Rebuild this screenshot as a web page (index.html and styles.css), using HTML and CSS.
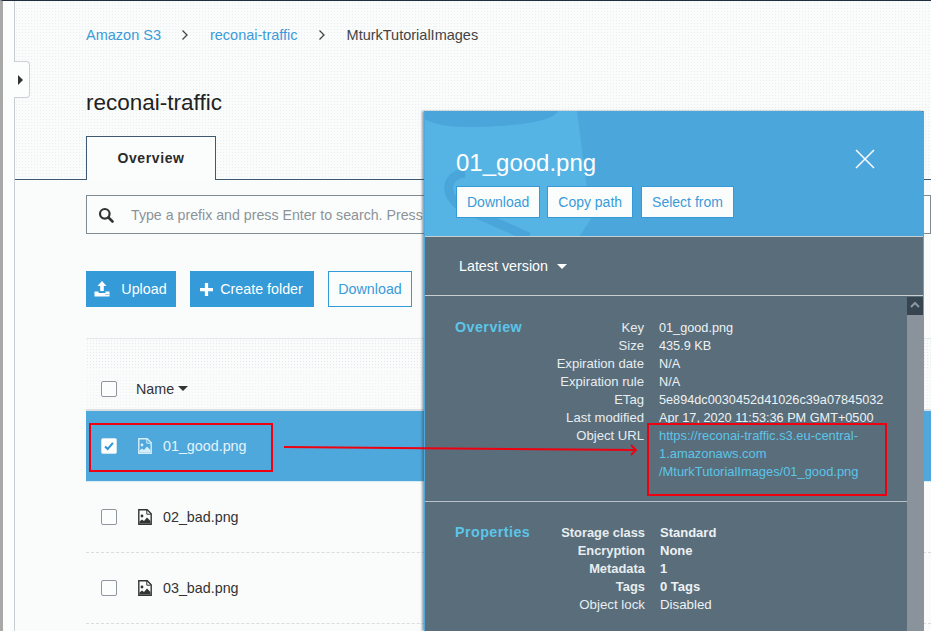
FILE: index.html
```html
<!DOCTYPE html>
<html>
<head>
<meta charset="utf-8">
<title>reconai-traffic - S3</title>
<link rel="stylesheet" href="styles.css">
</head>
<body>
<div class="page">
	<div class="rail">
		<button class="rail-toggle"><span class="rail-arrow"></span></button>
	</div>
	<div class="main">
		<div class="crumbs">
			<a>Amazon S3</a>
			<svg class="crumb-sep" viewBox="0 0 8 12"><path d="M1.5 1.5 6 6l-4.500 4.500" fill="none" stroke="#444" stroke-width="1.300"/></svg>
			<a>reconai-traffic</a>
			<svg class="crumb-sep" viewBox="0 0 8 12"><path d="M1.5 1.5 6 6l-4.500 4.500" fill="none" stroke="#444" stroke-width="1.300"/></svg>
			<span>MturkTutorialImages</span>
		</div>
		<h1 class="bucket">reconai-traffic</h1>
		<div class="tabs"><div class="tab">Overview</div></div>
		<div class="content">
			<div class="search">
				<svg class="search-icon" viewBox="0 0 16 16"><circle cx="6.800" cy="6.800" r="4.800" fill="none" stroke="#333" stroke-width="2.200"/><path d="m10.500 10.500 4 4" stroke="#333" stroke-width="2.600" stroke-linecap="round"/></svg>
				<span class="search-text">Type a prefix and press Enter to search. Press</span>
			</div>
			<div class="actions">
				<button class="btn btn-solid btn-upload">
					<svg class="btn-icon" viewBox="0 0 16 16"><path d="M8 0 12.500 5H9.800v5H6.200V5H3.500z" fill="#fff"/><path d="M.5 10.500h4v1.500h7v-1.500h4v5H.5z" fill="#fff"/><path d="M11.500 13.500h1M13.500 13.500h1" stroke="#349ad8"/></svg>
					Upload
				</button>
				<button class="btn btn-solid btn-create">
					<svg class="btn-icon-sm" viewBox="0 0 12 12"><path d="M4.500 0h3v4.500H12v3H7.500V12h-3V7.500H0v-3h4.500z" fill="#fff"/></svg>
					Create folder
				</button>
				<button class="btn btn-line">Download</button>
			</div>
			<div class="table">
				<div class="table-gap"></div>
				<div class="row head">
					<span class="check"></span>
					<span class="col-name">Name</span>
					<span class="caret"></span>
				</div>
				<div class="row selected">
					<span class="check on"><svg viewBox="0 0 16 16"><path d="m3.500 8.500 3 3 6-7" fill="none" stroke="#2f95d6" stroke-width="2.400"/></svg></span>
					<svg class="file-icon" viewBox="0 0 14 16"><path d="M.8.800h8.400l4 4v10.400H.8z" fill="none" stroke="#d8eefa" stroke-width="1.400"/><path d="M8.800 1v4.200h4" fill="none" stroke="#d8eefa"/><circle cx="4" cy="7" r="1.400" fill="#d8eefa"/><path d="M1.500 14.500v-2l2.500-2 2 1.500 3-3.500 3.500 3.500v2.500z" fill="#d8eefa"/></svg>
					<span class="file-name">01_good.png</span>
				</div>
				<div class="row">
					<span class="check"></span>
					<svg class="file-icon" viewBox="0 0 14 16"><path d="M.8.800h8.400l4 4v10.400H.8z" fill="none" stroke="#333" stroke-width="1.400"/><path d="M8.800 1v4.200h4" fill="none" stroke="#333"/><circle cx="4" cy="7" r="1.400" fill="#333"/><path d="M1.500 14.500v-2l2.500-2 2 1.500 3-3.500 3.500 3.500v2.500z" fill="#333"/></svg>
					<span class="file-name">02_bad.png</span>
				</div>
				<div class="row">
					<span class="check"></span>
					<svg class="file-icon" viewBox="0 0 14 16"><path d="M.8.800h8.400l4 4v10.400H.8z" fill="none" stroke="#333" stroke-width="1.400"/><path d="M8.800 1v4.200h4" fill="none" stroke="#333"/><circle cx="4" cy="7" r="1.400" fill="#333"/><path d="M1.500 14.500v-2l2.500-2 2 1.500 3-3.500 3.500 3.500v2.500z" fill="#333"/></svg>
					<span class="file-name">03_bad.png</span>
				</div>
			</div>
		</div>
	</div>
</div>

<div class="panel">
	<div class="panel-head">
		<svg class="panel-mark" viewBox="0 0 498 126"><path d="M0 0H152L166 108 154 126H0z" fill="#55b4e4"/><path d="M0 0H133C128 12 80 16 40 16 20 16 6 12 0 8z" fill="#4aa5da"/><path d="M40 62C20 64 18 84 36 96L104 126" fill="none" stroke="#4aa5da" stroke-width="9"/></svg>
		<div class="panel-title">
			<h2>01_good.png</h2>
			<svg class="close" viewBox="0 0 20 20"><path d="m1 1 18 18M19 1 1 19" stroke="#fff" stroke-width="1.500"/></svg>
		</div>
		<div class="panel-btns">
			<button class="pbtn">Download</button>
			<button class="pbtn">Copy path</button>
			<button class="pbtn">Select from</button>
		</div>
	</div>
	<div class="version">Latest version <span class="caret caret-white"></span></div>
	<div class="panel-body">
		<div class="details">
			<section class="section">
				<h3>Overview</h3>
				<dl class="props">
					<dt>Key</dt><dd>01_good.png</dd>
					<dt>Size</dt><dd>435.9 KB</dd>
					<dt>Expiration date</dt><dd>N/A</dd>
					<dt>Expiration rule</dt><dd>N/A</dd>
					<dt>ETag</dt><dd>5e894dc0030452d41026c39a07845032</dd>
					<dt>Last modified</dt><dd>Apr 17, 2020 11:53:36 PM GMT+0500</dd>
					<dt>Object URL</dt><dd class="url">https://reconai-traffic.s3.eu-central-<br>1.amazonaws.com<br>/MturkTutorialImages/01_good.png</dd>
				</dl>
			</section>
			<section class="section section-props">
				<h3>Properties</h3>
				<dl class="props props-bold">
					<dt>Storage class</dt><dd>Standard</dd>
					<dt>Encryption</dt><dd>None</dd>
					<dt>Metadata</dt><dd>1</dd>
					<dt>Tags</dt><dd>0 Tags</dd>
					<dt class="plain">Object lock</dt><dd class="plain">Disabled</dd>
				</dl>
			</section>
		</div>
		<div class="scrollbar"><div class="scroll-up"><svg viewBox="0 0 16 16"><path d="m4 10 4-4 4 4" fill="none" stroke="#8b97a1" stroke-width="2"/></svg></div></div>
	</div>
</div>

<div class="mark mark-file"></div>
<div class="mark mark-url"></div>
<svg class="mark-arrow" viewBox="0 0 360 20"><path d="M0 5 352 8" stroke="#ee0010" stroke-width="2" fill="none"/><path d="m347 3 5 5-5 5" stroke="#ee0010" stroke-width="1.800" fill="none"/></svg>
</body>
</html>
```
FILE: styles.css
```css
*{margin:0;padding:0;box-sizing:border-box;}
html,body{height:100%;}
body{width:931px;height:631px;overflow:hidden;position:relative;font-family:"Liberation Sans",Arial,sans-serif;color:#333;background:#fafcfc;}
button{font-family:inherit;cursor:pointer;}

.page{display:flex;height:631px;border-top:1px solid #1f2d3d;border-left:3px solid #a8a8a8;}
.rail{width:12px;flex:none;border-right:1px solid #c9ced2;position:relative;background:#fcfdfd;}
.rail-toggle{position:absolute;left:11px;top:60px;width:16px;height:37px;background:#fcfdfd;border:1px solid #ccd1d5;border-left:0;border-radius:0 4px 4px 0;display:flex;align-items:center;justify-content:center;}
.rail-arrow{border-left:5px solid #333;border-top:5px solid transparent;border-bottom:5px solid transparent;margin-left:-3px;}
.main{flex:1;min-width:0;background-color:#fafcfc;background-image:radial-gradient(#e9eff1 .5px,transparent .8px);background-size:3px 3px;}

.crumbs{display:flex;align-items:center;height:20px;margin:24px 0 0 71px;font-size:14.500px;color:#444;}
.crumbs a{color:#3a9bd9;}
.crumb-sep{width:8px;height:12px;margin:0 20.500px;}
.bucket{font-size:22.500px;font-weight:400;color:#222;line-height:30px;margin:43px 0 0 71px;}
.tabs{height:45px;margin-top:17px;padding:1px 0 0 71px;border-bottom:1px solid #3f5a70;}
.tab{width:130px;height:44px;border:1px solid #3f5a70;border-bottom:0;background:#fbfdfd;font-size:14px;font-weight:700;letter-spacing:.6px;color:#2b2b2b;text-align:center;line-height:42px;}

.content{background:#fafcfc;height:460px;padding:15px 0 0 71px;}
.search{display:flex;align-items:center;height:39px;border:1px solid #7f8a92;padding-left:11px;background:#fbfdfd;white-space:nowrap;overflow:hidden;}
.search-icon{width:16px;height:16px;flex:none;}
.search-text{margin-left:17px;font-size:14.200px;color:#8c9398;}
.actions{display:flex;gap:14px;margin-top:37px;}
.btn{height:36px;font-size:14.300px;display:flex;align-items:center;justify-content:center;border:1px solid #349ad8;}
.btn-solid{background:#349ad8;color:#fff;}
.btn-line{width:84px;background:#fbfdfd;color:#3a9bd9;}
.btn-upload{width:90px;gap:11px;padding-right:1px;}
.btn-create{width:124px;gap:7px;padding-right:1px;}
.btn-icon{width:16px;height:16px;}
.btn-icon-sm{width:13px;height:13px;}

.table{margin-top:31px;}
.table-gap{height:32px;border-top:1px solid #e3e8ec;background-image:radial-gradient(#e4eaee .6px,transparent .9px);background-size:3px 3px;}
.row{display:flex;align-items:center;height:71px;padding-left:15px;border-bottom:1px dashed #d9dddf;font-size:14.300px;color:#333;}
.row.head{height:41px;padding-bottom:2px;border-bottom:2px solid #dde0e2;background-image:radial-gradient(#eef2f4 .6px,transparent .9px);background-size:3px 3px;}
.row.selected{height:71px;background:#4fa8dc;border-bottom:1px solid #d8eaf5;color:#e4f3fb;}
.check{width:16px;height:16px;flex:none;border:1px solid #8e979e;border-radius:2px;background:#fcfdfd;}
.check.on{border-color:#cfe3ef;background:#fff;}
.check svg{display:block;width:14px;height:14px;}
.col-name{margin-left:19px;}
.caret{display:inline-block;width:0;height:0;margin-left:4px;border-left:5px solid transparent;border-right:5px solid transparent;border-top:5px solid #333;}
.caret-white{border-top-color:#fff;margin-left:5px;vertical-align:2px;}
.file-icon{width:14px;height:16px;margin-left:21px;flex:none;}
.file-name{margin-left:11px;}

.panel{position:absolute;left:424px;top:111px;width:500px;height:520px;background:#596d7b;border-left:1px solid #4fa8dc;border-right:1px solid #4fa8dc;box-shadow:-2px 0 2px rgba(70,80,90,.55);display:flex;flex-direction:column;color:#fff;}
.panel-head{position:relative;height:126px;background:#4ba6db;border-bottom:1px solid #c9ced1;padding:38px 0 0 31px;flex:none;overflow:hidden;border-radius:2px 2px 0 0;}
.panel-mark{position:absolute;left:0;top:0;width:498px;height:126px;}
.panel-title{position:relative;display:flex;align-items:center;justify-content:space-between;height:28px;padding-right:48px;}
.panel-title h2{font-size:24px;font-weight:400;}
.close{width:20px;height:20px;margin-top:-8px;}
.panel-btns{position:relative;display:flex;gap:7px;margin-top:9px;}
.pbtn{height:32px;padding:0 10px;background:#fbfdfd;border:1px solid #349ad8;color:#3a9bd9;font-size:14px;}
.pbtn:last-child{margin-left:1px;}
.version{height:59px;flex:none;border-bottom:1px solid #c9ced1;padding-left:34px;line-height:58px;font-size:14.300px;}
.panel-body{flex:1;display:flex;min-height:0;}
.details{flex:1;min-width:0;}
.section{display:flex;padding:22px 0 0 30px;height:206px;border-bottom:1px solid #b9c2c8;}
.section-props{height:auto;border:0;padding-top:21px;}
.section h3{width:72px;flex:none;font-size:14.300px;line-height:18px;color:#5cc5e8;letter-spacing:.45px;}
.props{display:grid;grid-template-columns:117px auto;column-gap:15px;font-size:12.700px;line-height:18px;align-content:start;margin-top:1px;}
.section-props .props{margin-left:1px;}
.props dt{text-align:right;color:#e8edf0;white-space:nowrap;font-size:13.100px;}
.props dd{color:#eef2f4;white-space:nowrap;}
.props .url{color:#5cc5e8;font-size:12.900px;}
.props-bold dt,.props-bold dd{font-weight:700;font-size:12.900px;}
.props-bold dd{font-size:13px;}
.props-bold .plain{font-weight:400;font-size:13.300px;}
.scrollbar{width:16px;flex:none;margin-top:1px;background:#8a939c;}
.scroll-up{height:18px;background:#36454f;}
.scroll-up svg{display:block;width:16px;height:16px;}

.mark{position:absolute;border:2px solid #ee0010;}
.mark-file{left:89px;top:423px;width:184px;height:49px;}
.mark-url{left:647px;top:423px;width:240px;height:73px;}
.mark-arrow{position:absolute;left:284px;top:442px;width:360px;height:20px;}
```
